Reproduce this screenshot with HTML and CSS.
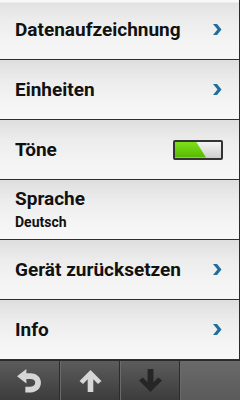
FILE: index.html
```html
<!DOCTYPE html>
<html>
<head>
<meta charset="utf-8">
<link rel="stylesheet" href="styles.css">
</head>
<body>
<div class="screen">
  <div class="list">
    <div class="row"><span class="label">Datenaufzeichnung</span><svg class="chev" width="10" height="13" viewBox="0 0 10 13"><path d="M1 1 L5 1 L9.5 6.5 L5 12 L1 12 L5.5 6.5 Z" fill="#1f6d9c"/></svg></div>
    <div class="row"><span class="label">Einheiten</span><svg class="chev" width="10" height="13" viewBox="0 0 10 13"><path d="M1 1 L5 1 L9.5 6.5 L5 12 L1 12 L5.5 6.5 Z" fill="#1f6d9c"/></svg></div>
    <div class="row"><span class="label">Töne</span><span class="toggle"><span class="on"></span></span></div>
    <div class="row two"><span class="label">Sprache</span><span class="sub">Deutsch</span></div>
    <div class="row"><span class="label">Gerät zurücksetzen</span><svg class="chev" width="10" height="13" viewBox="0 0 10 13"><path d="M1 1 L5 1 L9.5 6.5 L5 12 L1 12 L5.5 6.5 Z" fill="#1f6d9c"/></svg></div>
    <div class="row"><span class="label">Info</span><svg class="chev" width="10" height="13" viewBox="0 0 10 13"><path d="M1 1 L5 1 L9.5 6.5 L5 12 L1 12 L5.5 6.5 Z" fill="#1f6d9c"/></svg></div>
  </div>
  <div class="toolbar">
    <div class="btn"><svg width="27" height="26" viewBox="0 0 26 24"><path d="M1 7.5 L10 0.5 L10 4.5 L14 4.5 C20.5 4.5 24 9 24 13.5 C24 18.5 20.5 23 14 23 L9 23 L9 17.5 L14 17.5 C16.8 17.5 18.5 15.8 18.5 13.5 C18.5 11.3 16.8 10 14 10 L10 10 L10 14.5 Z" fill="#d6d6d6"/></svg></div>
    <div class="btn"><svg width="25" height="24" viewBox="0 0 24 24"><path d="M12 1 L23 12 L19.5 15 L14.8 10.3 L14.8 23 L9.2 23 L9.2 10.3 L4.5 15 L1 12 Z" fill="#d6d6d6"/></svg></div>
    <div class="btn"><svg width="25" height="25" viewBox="0 0 24 24"><path d="M12 23 L23 12 L19.5 9 L14.8 13.7 L14.8 1 L9.2 1 L9.2 13.7 L4.5 9 L1 12 Z" fill="#262626"/></svg></div>
    <div class="btn empty"></div>
  </div>
</div>
</body>
</html>
```
FILE: styles.css
```css
* { box-sizing: border-box; }
html, body { margin: 0; padding: 0; }
body { background: #fff; font-family: Roboto, "Open Sans", sans-serif; }
.screen { width: 240px; height: 400px; display: flex; flex-direction: column; overflow: hidden; }
.list { display: flex; flex-direction: column; border-right: 1px solid #2a2a2a; }
.row {
  height: 60px;
  display: flex;
  align-items: center;
  justify-content: space-between;
  padding: 0 17px 0 15px;
  border-bottom: 1px solid #2e2e2e;
  background: linear-gradient(#dedede 0px, #ececec 20px, #f5f5f5 45px, #f7f7f7 59px);
}
.row:first-child { background: linear-gradient(#f8f8f8 0px, #f8f8f8 2px, #e2e2e2 3px, #ececec 20px, #f5f5f5 45px, #f7f7f7 59px); }
.label { font-weight: 700; font-size: 19px; color: #111; line-height: 22px; }
.chev { display: block; }
.two { flex-direction: column; align-items: flex-start; justify-content: flex-start; padding-top: 7px; }
.two .label { line-height: 24px; }
.sub { font-weight: 700; font-size: 14px; color: #111; line-height: 18px; margin-top: 2px; }
.toggle {
  width: 50px; height: 20px; border: 2px solid #333; border-radius: 2px;
  background: linear-gradient(#f4f4f4, #cfcfcf);
  position: relative; overflow: hidden; margin-right: -1px;
}
.on {
  position: absolute; left: 0; top: 0; bottom: 0; width: 32px;
  background: linear-gradient(#7ee01a, #55b800);
  clip-path: polygon(0 0, 21px 0, 31px 100%, 0 100%);
}
.toolbar { flex: 1; display: flex; background: linear-gradient(#5a5a5a, #3a3a3a); border-top: 1px solid #2a2a2a; }
.btn {
  width: 60px; display: flex; align-items: center; justify-content: center;
  border-right: 1px solid #2c2c2c; border-left: 1px solid #6a6a6a;
  background: linear-gradient(#5c5c5c, #3c3c3c);
}
.btn:first-child { border-left: none; }
.btn.empty { border-right: none; background: linear-gradient(#6a6a6a, #5a5a5a); }
```
